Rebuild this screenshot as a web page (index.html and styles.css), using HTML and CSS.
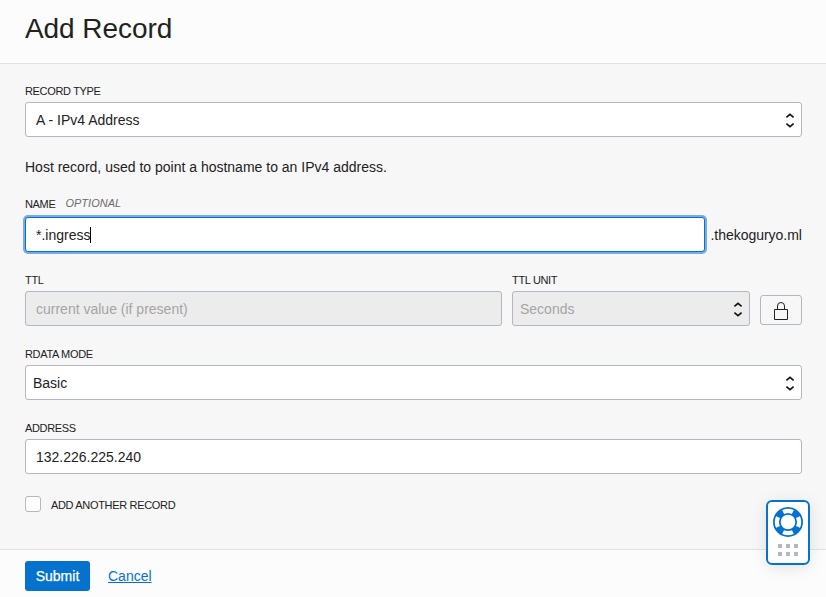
FILE: index.html
```html
<!DOCTYPE html>
<html lang="en">
<head>
<meta charset="utf-8">
<title>Add Record</title>
<link rel="stylesheet" href="styles.css">
</head>
<body>
<div class="dialog">
  <header class="header"><h1>Add Record</h1></header>
  <main class="content">
    <div class="label">RECORD TYPE</div>
    <div class="box"><span>A - IPv4 Address</span>
      <svg class="arrows" width="10" height="17" viewBox="0 0 10 17"><path d="M1.4 6.400 5 3.300 8.600 6.400M1.400 12.600 5 15.700 8.600 12.600"/></svg></div>
    <p class="hint">Host record, used to point a hostname to an IPv4 address.</p>
    <div class="label name-label"><span>NAME</span><em>OPTIONAL</em></div>
    <div class="row">
      <div class="box focused"><span>*.ingress</span><i class="caret"></i></div>
      <span class="suffix">.thekoguryo.ml</span>
    </div>
    <div class="row ttl-row">
      <div class="ttl"><div class="label">TTL</div><div class="box disabled"><span>current value (if present)</span></div></div>
      <div class="unit"><div class="label">TTL UNIT</div><div class="box disabled native"><span>Seconds</span>
        <svg class="arrows" width="10" height="17" viewBox="0 0 10 17"><path d="M1.4 6.400 5 3.300 8.600 6.400M1.400 12.600 5 15.700 8.600 12.600"/></svg></div></div>
      <button class="lock" aria-label="Unlock TTL"><svg width="14" height="18" viewBox="0 0 14 18"><path d="M.5 7.500h13v10H.5zM3.500 7.500V4a3.500 3.500 0 0 1 7 0V7.500"/></svg></button>
    </div>
    <div class="label gap">RDATA MODE</div>
    <div class="box native"><span>Basic</span>
      <svg class="arrows" width="10" height="17" viewBox="0 0 10 17"><path d="M1.4 6.400 5 3.300 8.600 6.400M1.400 12.600 5 15.700 8.600 12.600"/></svg></div>
    <div class="label gap">ADDRESS</div>
    <div class="box"><span>132.226.225.240</span></div>
    <div class="check"><span class="checkbox"></span><span class="check-label">ADD ANOTHER RECORD</span></div>
  </main>
  <footer class="footer"><button class="submit">Submit</button><a class="cancel" href="#">Cancel</a></footer>
</div>
<aside class="help">
  <svg width="30" height="30" viewBox="0 0 30 30">
    <circle class="ring" cx="15" cy="15" r="11.300"/>
    <circle class="spokes" cx="15" cy="15" r="11.300" pathLength="360" stroke-dasharray="38 52" stroke-dashoffset="-26"/>
    <circle class="edge" cx="15" cy="15" r="14.100"/>
    <circle class="edge" cx="15" cy="15" r="8.200"/>
  </svg>
  <div class="dots"><i></i><i></i><i></i><i></i><i></i><i></i></div>
</aside>
</body>
</html>
```
FILE: styles.css
```css
* { box-sizing: border-box; }
body { margin: 0; overflow: hidden; background: #f7f7f7; color: #222; font: 14px/20px "Liberation Sans", Arial, sans-serif; }
.dialog { height: 597px; display: flex; flex-direction: column; }
.header { height: 64px; flex: none; padding: 11px 25px 0; background: #fcfcfc; border-bottom: 1px solid #e2e2e2; }
h1 { margin: 0; font-size: 28px; line-height: 36px; font-weight: 400; letter-spacing: -.07px; }
.content { flex: 1; padding: 19px 24px 0 25px; }
.label { height: 16px; margin-bottom: 3px; font-size: 11px; line-height: 16px; letter-spacing: -.33px; white-space: nowrap; }
.gap { margin-top: 20px; }
.box { height: 35px; display: flex; align-items: center; padding: 0 10px; background: #fff; border: 1px solid #b3b7c2; border-radius: 3px; white-space: nowrap; }
.native { padding-left: 7px; }
.disabled { background: #ececec; color: #a5a5a5; }
.arrows { margin-left: auto; margin-right: -4px; fill: none; stroke: #111; stroke-width: 1.6; }
.hint { margin: 20px 0 19px; }
.row { display: flex; }
.name-label { display: flex; margin-bottom: 5px; }
.name-label em { margin-left: 10px; color: #6b6b6b; line-height: 14px; letter-spacing: 0; }
.focused { border-color: #0572ce; box-shadow: 0 0 0 2px #7aaae3; flex: none; width: 680px; }
.caret { width: 1px; height: 16px; background: #000; }
.suffix { margin-left: 5.5px; line-height: 36px; letter-spacing: -.03px; height: 35px; white-space: nowrap; }
.ttl-row { margin-top: 20px; align-items: flex-end; gap: 10px; }
.ttl { width: 477px; }
.unit { width: 238px; }
.lock { width: 42px; height: 30px; margin-bottom: 1px; padding: 0; display: grid; place-items: center; background: #f7f7f7; border: 1px solid #b3b7c2; border-radius: 3px; }
.lock svg { fill: none; stroke: #222; margin-top: 2px; }
.check { display: flex; height: 16px; margin-top: 22px; font-size: 11px; line-height: 18px; }
.check-label { letter-spacing: -.33px; }
.checkbox { width: 16px; height: 16px; margin-right: 10px; background: #fff; border: 1px solid #b3b7c2; border-radius: 3px; }
.footer { height: 48px; flex: none; padding: 11px 25px; display: flex; background: #fcfcfc; border-top: 1px solid #e2e2e2; }
.submit { width: 65px; height: 30px; padding: 0; border: 0; border-radius: 3px; background: #0572ce; color: #fff; font: inherit; -webkit-text-stroke: .25px #fff; }
.cancel { margin-left: 18px; line-height: 30px; color: #0572ce; }
.help { position: absolute; left: 766px; top: 500px; width: 44px; height: 65px; display: flex; flex-direction: column; align-items: center; padding-top: 5px; background: #fff; border: 2px solid #0572ce; border-radius: 6px; box-shadow: 0 3px 16px rgba(0,0,0,.1); }
.help svg { fill: none; stroke: #0572ce; }
.ring { stroke: #fff; stroke-width: 6; }
.spokes { stroke-width: 6; }
.edge { stroke-width: 1.800; }
.dots { display: grid; grid-template-columns: repeat(3, 4px); gap: 4px; margin-top: 7px; }
.dots i { width: 4px; height: 4px; background: #b3b7c2; }
```
